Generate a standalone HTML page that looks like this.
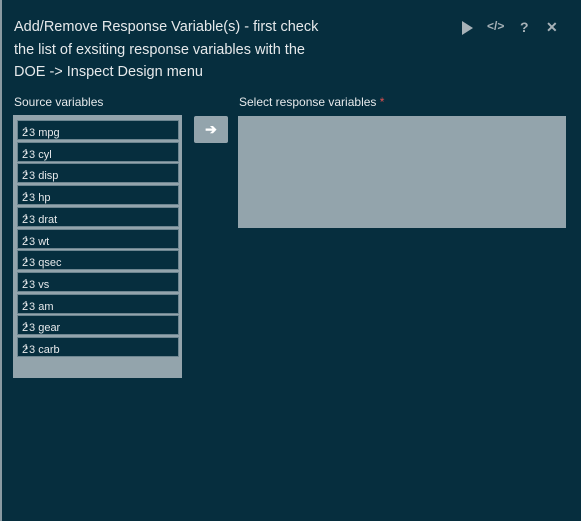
<!DOCTYPE html><html><head><style>
body{margin:0;width:581px;height:521px;background:#062e3e;font-family:"Liberation Sans",sans-serif;color:#e6e9eb;position:relative;overflow:hidden}
.edge{position:absolute;left:0;top:0;width:2px;height:521px;background:#8a9aa2}
.title{position:absolute;left:14px;top:16px;font-size:14.5px;line-height:22.5px}
.lbl{position:absolute;font-size:12px}
.src{position:absolute;left:13px;top:115px;width:169px;height:263px;background:#93a4ac;box-sizing:border-box}
.it{position:absolute;left:4px;width:162px;height:20px;background:#062e3e;border:1px solid #6d8590;box-sizing:border-box;font-size:11px;line-height:19px;padding-left:4px}
.it sup{font-size:7px;vertical-align:4px;margin-left:-4px;margin-right:1px}
.btn{position:absolute;left:194px;top:116px;width:34px;height:27px;background:#93a4ac;border-radius:2px;color:#fff;text-align:center;line-height:26px;font-size:14px;font-weight:bold}
.dst{position:absolute;left:238px;top:116px;width:328px;height:112px;background:#93a4ac}
.ic{position:absolute;top:19px;color:#a7b2b8;font-weight:bold;font-size:14px}
</style></head><body>
<div class="edge"></div>
<div class="title">Add/Remove Response Variable(s) - first check<br>the list of exsiting response variables with the<br>DOE -&gt; Inspect Design menu</div>
<svg class="ic" style="left:461px;top:21px" width="13" height="14"><path d="M1 0 L12 7 L1 14Z" fill="#a7b2b8"/></svg>
<div class="ic" style="left:487px;font-size:12px">&lt;/&gt;</div>
<div class="ic" style="left:520px">?</div>
<div class="ic" style="left:546px">✕</div>
<div class="lbl" style="left:14px;top:95px">Source variables</div>
<div class="lbl" style="left:239px;top:95px">Select response variables <span style="color:#e05050">*</span></div>
<div class="src">
<div class="it" style="top:5px">2<sup>1</sup>3 mpg</div>
<div class="it" style="top:26.7px">2<sup>1</sup>3 cyl</div>
<div class="it" style="top:48.4px">2<sup>1</sup>3 disp</div>
<div class="it" style="top:70.1px">2<sup>1</sup>3 hp</div>
<div class="it" style="top:91.8px">2<sup>1</sup>3 drat</div>
<div class="it" style="top:113.5px">2<sup>1</sup>3 wt</div>
<div class="it" style="top:135.2px">2<sup>1</sup>3 qsec</div>
<div class="it" style="top:156.9px">2<sup>1</sup>3 vs</div>
<div class="it" style="top:178.6px">2<sup>1</sup>3 am</div>
<div class="it" style="top:200.3px">2<sup>1</sup>3 gear</div>
<div class="it" style="top:222px">2<sup>1</sup>3 carb</div>
</div>
<div class="btn">➔</div>
<div class="dst"></div>
</body></html>
